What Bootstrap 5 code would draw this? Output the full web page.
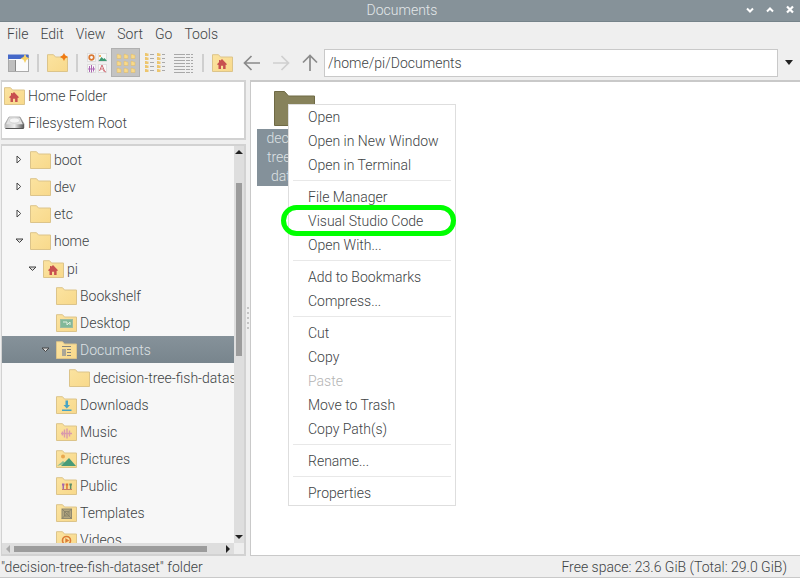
<!DOCTYPE html>
<html lang="en">
<head>
<meta charset="utf-8">
<meta name="viewport" content="width=device-width, initial-scale=1">
<title>Documents</title>
<link href="https://cdn.jsdelivr.net/npm/bootstrap@5.3.0/dist/css/bootstrap.min.css" rel="stylesheet">
<style>
body{font-family:Roboto,"Liberation Sans",sans-serif;font-weight:300;font-size:14px;line-height:20px;color:#404345;background:#efefef}
svg{display:block;flex:none}
button{color:inherit;font-weight:inherit}
.titlebar{background:#869299;color:#e3e7e9;height:22px;border-bottom:1px solid #76838a}
.win-buttons{right:4px;top:4px;gap:8px}
.win-buttons button,.plain{border:0;background:none;padding:0;color:inherit}
.menubar{padding:0 7px;gap:12px;height:23px}
.toolbar{padding:3px 0 3px 4px;height:35px}
.tool{width:29px;height:29px;border:0;background:none;padding:0;display:flex;align-items:center;justify-content:center}
.tool.active{background:#c3c3c3;border:1px solid #b0b0b0}
.tool-sep{width:10px;display:flex;justify-content:center}
.tool-sep::before{content:"";width:2px;height:18px;background:#cfcfcf}
.address{border:1px solid #c9c9c9;background:#fff;height:28px;padding:0 3px;color:inherit;font-weight:300;min-width:0}
.address-drop{width:22px}
.sidebar{flex:0 0 246px;padding-left:1px;min-width:0}
.places,.tree-box{border:2px solid #d2d2d2;border-left-width:1px}
.places{background:#fff;height:60px}
.place{height:27px;padding-left:2px;gap:3px;color:inherit;text-decoration:none}
.tree-box{margin-top:4px;background:#f7f7f7}
.tree,.tree ul{list-style:none;margin:0;padding:0}
.tree .spaced{margin-top:1px}
.tree-row{height:27px;gap:3px;width:100%;white-space:nowrap;padding-left:11px}
.lv1{padding-left:24px}.lv2{padding-left:37px}.lv3{padding-left:50px}
.tree-row .toggle{width:12px;flex:none;display:flex;justify-content:center;margin-right:2px}
.tree-row.selected{background:linear-gradient(#86929a,#78858d);color:#dde1e4}
.shrinkable{min-width:0;min-height:0}
.vbar{width:10px;background:#dedede}
.vbar .thumb{width:6px;height:173px;margin-top:29px;background:#9c9c9c}
.hbar{height:11px;background:#dedede}
.hbar .thumb{height:6px;width:193px;background:#9c9c9c}
.bar-corner{width:10px;height:11px;background:#eee}
.splitter{width:4px;gap:3px}
.splitter i{width:2px;height:2px;background:#c4c4c4}
.files{background:#fff;border:1px solid #c9c9c9;border-width:2px 0 1px 1px;min-width:0}
.file-item{width:74px;margin:9px 0 0 6px;text-align:center}
.file-name{background:#84919a;color:#dde1e4;line-height:19px;margin-top:3px}
.ctx.dropdown-menu{left:37px;top:22px;width:168px;min-width:0;padding:0;border:1px solid #dedede;border-radius:0;background:#fff;font-size:14px;color:inherit;--bs-dropdown-link-color:#404345;--bs-dropdown-item-padding-y:2px;--bs-dropdown-item-padding-x:19px}
.ctx .dropdown-item{font-weight:300;line-height:20px}
.ctx .dropdown-item:disabled{color:#b4b4b4}
.ctx hr{margin:3px 4px 4px;border:0;border-top:1px solid #e8e8e8;opacity:1}
.ring{left:-8px;right:-1px;top:-4px;height:31px;border:5px solid #0f0;border-radius:16px;pointer-events:none}
.status{height:22px;padding:0 13px 0 1px;border-bottom:1px solid #c9c9c9}
</style>
<script src="https://cdn.jsdelivr.net/npm/bootstrap@5.3.0/dist/js/bootstrap.bundle.min.js"></script>
</head>
<body class="vh-100 d-flex flex-column overflow-hidden">
<svg width="0" height="0" class="position-absolute" aria-hidden="true">
<defs>
<linearGradient id="fg" x1="0" y1="0" x2="1" y2="1"><stop offset="0" stop-color="#fbe3a0"/><stop offset="1" stop-color="#f8d98b"/></linearGradient>
<linearGradient id="dg" x1="0" y1="0" x2="1" y2="0"><stop offset="0" stop-color="#bbb"/><stop offset=".5" stop-color="#eee"/><stop offset="1" stop-color="#555"/></linearGradient>
<symbol id="folder" viewBox="0 0 21 18"><path d="M.5 17.500V.7h6l2 2.300h12v14.500z" fill="url(#fg)" stroke="#dcc48a"/></symbol>
<symbol id="house" viewBox="0 0 10 10"><path d="M5 0 10 5.300 9 6 8.600 5.700V10H6.100V6.700H4V10H1.500V5.700L1 6 0 5.300 2 3.200V1h1.300v.8z" fill="#c8504f"/></symbol>
<symbol id="closed" viewBox="0 0 6 9"><path d="M1 1v7l3.700-3.500z" fill="#fff" stroke="#444"/></symbol>
<symbol id="open" viewBox="0 0 9 6"><path d="M1 1h7L4.500 4.500z" fill="#ddd" stroke="#444"/></symbol>
</defs>
</svg>

<header class="titlebar position-relative flex-shrink-0 text-center"><span class="ms-1">Documents</span>
<div class="win-buttons position-absolute d-flex">
<button aria-label="Minimise"><svg width="12" height="12"><path d="M3 4.500 6 7.500 9 4.500" fill="none" stroke="#fff" stroke-width="2"/></svg></button>
<button aria-label="Maximise"><svg width="12" height="12"><path d="M3 7.500 6 4.500 9 7.500" fill="none" stroke="#fff" stroke-width="2"/></svg></button>
<button aria-label="Close"><svg width="12" height="12"><path d="M3 2.500 9 8.500M9 2.500 3 8.500" fill="none" stroke="#fff" stroke-width="2.200"/></svg></button>
</div>
</header>

<nav class="menubar d-flex align-items-center flex-shrink-0">
<button class="plain">File</button><button class="plain">Edit</button><button class="plain">View</button><button class="plain">Sort</button><button class="plain">Go</button><button class="plain">Tools</button>
</nav>

<div class="toolbar d-flex align-items-center flex-shrink-0">
<button class="tool" aria-label="New window"><svg width="22" height="20"><rect x=".5" y="2.500" width="20" height="16" fill="#fbfbfb" stroke="#aaa"/><path d="M1 7h6v11H1z" fill="#bfbfbf"/><path d="M7.500 7v11" stroke="#888"/><path d="M0 1.500h20.500V6H0z" fill="#4568c8"/><path d="m17 1 1.500 3 3 1.500-3 1.300L17 10l-1.500-3.200-3-1.300 3-1.500z" fill="#f8d266"/></svg></button>
<span class="tool-sep"></span>
<button class="tool" aria-label="New folder"><svg width="22" height="19"><use href="#folder" width="21" height="18" y="1"/><path d="m17 0 1.200 2.300L21 4l-2.800 1.500L17 8l-1.300-2.500L13 4l2.700-1.700z" fill="#ef7a12"/></svg></button>
<span class="tool-sep"></span>
<button class="tool" aria-label="Icon view"><svg width="22" height="22"><g fill="#f8f8f8" stroke="#dedede"><rect x="1.500" y="1.500" width="8" height="8"/><rect x="12.500" y="1.500" width="8" height="8"/><rect x="1.500" y="12.500" width="8" height="8"/><rect x="12.500" y="12.500" width="8" height="8"/></g><circle cx="5.500" cy="5.500" r="2.300" fill="none" stroke="#d97832" stroke-width="1.700"/><circle cx="14" cy="4" r="1" fill="#e8a03c"/><path d="m12.500 9 3-4 2 2 1-1 2.500 3z" fill="#3f9a72"/><path d="M2 17h7M3.500 14v6M5.500 13v7.500M7.500 14.500v5" stroke="#ad68b5" fill="none"/><path d="m13.500 19 2.500-6 2.500 6M14.500 17h3M17 18.500l3 1.500" stroke="#cf6c74" fill="none"/></svg></button>
<button class="tool active" aria-label="Thumbnail view" aria-pressed="true"><svg width="22" height="22"><g fill="#f8d98b" stroke="#dfb865" stroke-width=".5"><path id="mini" d="M2 6.500V2.300h1.800l.6.700H6v3.500z"/><use href="#mini" x="7"/><use href="#mini" x="14"/><use href="#mini" y="7"/><use href="#mini" x="7" y="7"/><use href="#mini" x="14" y="7"/><use href="#mini" y="14"/><use href="#mini" x="7" y="14"/><use href="#mini" x="14" y="14"/></g></svg></button>
<button class="tool" aria-label="Compact view"><svg width="22" height="22"><g fill="#edc66e"><path id="cell" d="M1 1h1.500l.5.500h1.500V4H1z"/><use href="#cell" y="4"/><use href="#cell" y="8"/><use href="#cell" y="12"/><use href="#cell" y="16"/><use href="#cell" x="12"/><use href="#cell" x="12" y="4"/><use href="#cell" x="12" y="8"/><use href="#cell" x="12" y="12"/><use href="#cell" x="12" y="16"/></g><path d="M6 2.500h4M6 6.500h4M6 10.500h4M6 14.500h4M6 18.500h4M18 2.500h3M18 6.500h3M18 10.500h3M18 14.500h3M18 18.500h3" stroke="#a9a9a9"/></svg></button>
<button class="tool" aria-label="Detailed list view"><svg width="22" height="22"><path d="M1 2.500h11M1 5.500h11M1 8.500h11M1 11.500h11M1 14.500h11M1 17.500h11M1 20.500h11M13 2.500h4M13 5.500h4M13 8.500h4M13 11.500h4M13 14.500h4M13 17.500h4M13 20.500h4M18 2.500h2M18 5.500h2M18 8.500h2M18 11.500h2M18 14.500h2M18 17.500h2M18 20.500h2" stroke="#a8a8a8"/></svg></button>
<span class="tool-sep"></span>
<button class="tool" aria-label="Home"><svg width="21" height="18"><use href="#folder"/><use href="#house" x="5" y="5" width="10" height="10"/></svg></button>
<button class="tool" aria-label="Back"><svg width="20" height="18"><path d="M18 9H3M9.500 2 2.500 9l7 7" fill="none" stroke="#8a8a8a" stroke-width="1.700"/></svg></button>
<button class="tool" aria-label="Forward" disabled><svg width="20" height="18"><path d="M2 9h15M10.500 2l7 7-7 7" fill="none" stroke="#cfcfcf" stroke-width="1.700"/></svg></button>
<button class="tool" aria-label="Up"><svg width="18" height="20"><path d="M9 18V3M2 9.500l7-7 7 7" fill="none" stroke="#8a8a8a" stroke-width="1.700"/></svg></button>
<input class="address flex-grow-1" type="text" aria-label="Location" value="/home/pi/Documents">
<button class="plain address-drop d-flex justify-content-center" aria-label="Location history"><svg width="8" height="5"><path d="M0 0h8L4 5z" fill="#222"/></svg></button>
</div>

<div class="d-flex flex-grow-1 shrinkable">
<aside class="sidebar d-flex flex-column">
<div class="places flex-shrink-0">
<a class="place d-flex align-items-center" href="#"><svg width="21" height="18"><use href="#folder"/><use href="#house" x="5" y="5" width="10" height="10"/></svg>Home Folder</a>
<a class="place d-flex align-items-center" href="#"><svg width="21" height="18"><path d="M5 3h11l4 7v4H1v-4z" fill="url(#dg)" stroke="#999" stroke-width=".7"/><path d="M5.500 3.500h10l3.500 7H2z" fill="#e2e2e2"/><ellipse cx="10.500" cy="6.500" rx="5" ry="2.500" fill="#f6f6f6" stroke="#c7c7c7" stroke-width=".6"/><path d="M1 10.500h19v4H1z" fill="url(#dg)"/><path d="M1.500 14.500h18" stroke="#555"/></svg>Filesystem Root</a>
</div>
<div class="tree-box shrinkable flex-grow-1 d-flex flex-column">
<div class="d-flex flex-grow-1 shrinkable">
<div class="flex-grow-1 overflow-hidden shrinkable">
<ul class="tree">
<li><button class="plain tree-row d-flex align-items-center"><span class="toggle"><svg width="6" height="9"><use href="#closed"/></svg></span><svg width="21" height="18"><use href="#folder"/></svg>boot</button></li>
<li><button class="plain tree-row d-flex align-items-center"><span class="toggle"><svg width="6" height="9"><use href="#closed"/></svg></span><svg width="21" height="18"><use href="#folder"/></svg>dev</button></li>
<li><button class="plain tree-row d-flex align-items-center"><span class="toggle"><svg width="6" height="9"><use href="#closed"/></svg></span><svg width="21" height="18"><use href="#folder"/></svg>etc</button></li>
<li><button class="plain tree-row d-flex align-items-center"><span class="toggle"><svg width="9" height="6"><use href="#open"/></svg></span><svg width="21" height="18"><use href="#folder"/></svg>home</button>
<ul class="spaced">
<li><button class="plain tree-row lv1 d-flex align-items-center"><span class="toggle"><svg width="9" height="6"><use href="#open"/></svg></span><svg width="21" height="18"><use href="#folder"/><use href="#house" x="5" y="5" width="10" height="10"/></svg>pi</button>
<ul>
<li><button class="plain tree-row lv2 d-flex align-items-center"><span class="toggle"></span><svg width="21" height="18"><use href="#folder"/></svg>Bookshelf</button></li>
<li><button class="plain tree-row lv2 d-flex align-items-center"><span class="toggle"></span><svg width="21" height="18"><use href="#folder"/><rect x="4.500" y="5.500" width="12" height="8" fill="#82b899" stroke="#9cbca2"/><path d="M7 8h4v3l3-3v3" fill="none" stroke="#e3f0e2"/></svg>Desktop</button></li>
<li><button class="plain tree-row lv2 selected d-flex align-items-center"><span class="toggle"><svg width="9" height="6"><use href="#open"/></svg></span><svg width="21" height="18"><use href="#folder"/><path d="M6 5.500h9M11 8.500h4M11 11.500h4M11 14.500h4" stroke="#86857d"/><path d="M6 8h4v7H6z" fill="#aaa697"/></svg>Documents</button>
<ul class="spaced"><li><button class="plain tree-row lv3 d-flex align-items-center"><span class="toggle"></span><svg width="21" height="18"><use href="#folder"/></svg>decision-tree-fish-dataset</button></li></ul></li>
<li><button class="plain tree-row lv2 d-flex align-items-center"><span class="toggle"></span><svg width="21" height="18"><use href="#folder"/><path d="M9.500 4.500h2.500V9h2l-3.200 3.500L7.500 9h2zM6 13.500h9.500V15H6z" fill="#47a4c4"/></svg>Downloads</button></li>
<li><button class="plain tree-row lv2 d-flex align-items-center"><span class="toggle"></span><svg width="21" height="18"><use href="#folder"/><path d="M6.500 8.500v4M8.500 6.500v8M11 5.500v10M13.500 7.500v6M5 10.500h11" stroke="#d99aac" stroke-width="1.400"/></svg>Music</button></li>
<li><button class="plain tree-row lv2 d-flex align-items-center"><span class="toggle"></span><svg width="21" height="18"><use href="#folder"/><circle cx="7" cy="6.500" r="2" fill="#e9a84f"/><path d="m1 16 6-5 3 2.500z" fill="#86bd93"/><path d="m5 16 8-8 7 8z" fill="#489b78"/></svg>Pictures</button></li>
<li><button class="plain tree-row lv2 d-flex align-items-center"><span class="toggle"></span><svg width="21" height="18"><use href="#folder"/><path d="M6 6.500h2.500v2H8v4H6.500v-4H6z" fill="#a568ad"/><path d="M9.700 6.500h2.500v2h-.5v4h-1.500v-4h-.5z" fill="#df7731"/><path d="M13.400 6.500h2.500v2h-.5v4h-1.500v-4h-.5z" fill="#5c8d68"/><path d="M6 12.500h10" stroke="#c77b65"/></svg>Public</button></li>
<li><button class="plain tree-row lv2 d-flex align-items-center"><span class="toggle"></span><svg width="21" height="18"><use href="#folder"/><rect x="6" y="5" width="9.500" height="9.500" fill="#b3a67f" stroke="#8f8970"/><path d="m6 5 9.500 9.500m0-9.500L6 14.500M8.500 7.500h4.500V12H8.500z" stroke="#847d66" stroke-width=".8" fill="none"/></svg>Templates</button></li>
<li><button class="plain tree-row lv2 d-flex align-items-center"><span class="toggle"></span><svg width="21" height="18"><use href="#folder"/><circle cx="10.500" cy="9.500" r="4" fill="#fbe3a0" stroke="#db7b36" stroke-width="1.600"/><path d="m9.300 7 4 2.500-4 2.500z" fill="#db7b36"/></svg>Videos</button></li>
</ul></li></ul></li>
</ul>
</div>
<div class="vbar d-flex flex-column align-items-center flex-shrink-0 py-1"><svg width="8" height="4"><path d="M0 4h8L4 0z" fill="#222"/></svg><div class="thumb"></div><svg class="mt-auto" width="8" height="4"><path d="M0 0h8L4 4z" fill="#222"/></svg></div>
</div>
<div class="d-flex flex-shrink-0"><div class="hbar flex-grow-1 d-flex align-items-center px-1"><svg width="4" height="8"><path d="M4 0v8L0 4z" fill="#aaa"/></svg><div class="thumb ms-1"></div><svg class="ms-auto" width="4" height="8"><path d="M0 0v8l4-4z" fill="#222"/></svg></div><div class="bar-corner"></div></div>
</div>
</aside>
<div class="splitter d-flex flex-column align-items-center justify-content-center" role="separator"><i></i><i></i><i></i><i></i><i></i></div>
<main class="files position-relative flex-grow-1">
<div class="file-item"><svg class="mx-auto" width="41" height="35"><path d="M.5 34.500v-34h10l4 4.500h26v29.500z" fill="#87825b" stroke="#6f6a45"/></svg><div class="file-name">decision-<br>tree-fish-<br>dataset</div></div>
<ul class="ctx dropdown-menu show">
<li><button class="dropdown-item">Open</button></li>
<li><button class="dropdown-item">Open in New Window</button></li>
<li><button class="dropdown-item">Open in Terminal</button></li>
<li><hr></li>
<li><button class="dropdown-item">File Manager</button></li>
<li class="position-relative"><button class="dropdown-item">Visual Studio Code</button><span class="ring position-absolute"></span></li>
<li><button class="dropdown-item">Open With...</button></li>
<li><hr></li>
<li><button class="dropdown-item">Add to Bookmarks</button></li>
<li><button class="dropdown-item">Compress...</button></li>
<li><hr></li>
<li><button class="dropdown-item">Cut</button></li>
<li><button class="dropdown-item">Copy</button></li>
<li><button class="dropdown-item" disabled>Paste</button></li>
<li><button class="dropdown-item">Move to Trash</button></li>
<li><button class="dropdown-item">Copy Path(s)</button></li>
<li><hr></li>
<li><button class="dropdown-item">Rename...</button></li>
<li><hr></li>
<li><button class="dropdown-item">Properties</button></li>
</ul>
</main>
</div>

<footer class="status d-flex justify-content-between align-items-center flex-shrink-0"><span>"decision-tree-fish-dataset" folder</span><span>Free space: 23.6 GiB (Total: 29.0 GiB)</span></footer>
</body>
</html>
